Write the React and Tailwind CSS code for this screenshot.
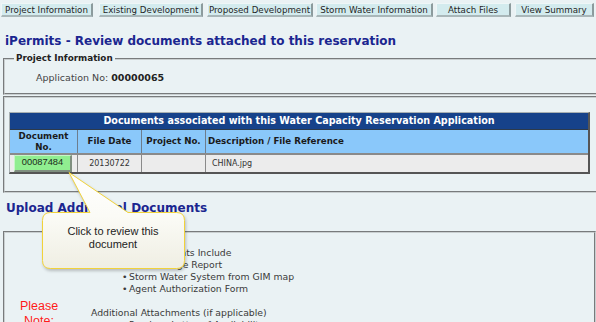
import React from 'react';

const navButtons = [
    { label: 'Project Information', cls: 'ml-[1px] w-[92px]' },
    { label: 'Existing Development', cls: 'ml-[6px] w-[104px]' },
    { label: 'Proposed Development', cls: 'ml-[4px] w-[106px]' },
    { label: 'Storm Water Information', cls: 'ml-[3px] w-[117px]' },
    { label: 'Attach Files', cls: 'ml-[3px] w-[75px]' },
    { label: 'View Summary', cls: 'ml-[4px] w-[79px]' },
];

const requiredDocs = ['Water Usage Report', 'Storm Water System from GIM map', 'Agent Authorization Form'];

const Bullet = ({ children }) => (
    <div className="flex h-[12px] items-center pl-[31px]">
        <span className="w-[7px]">•</span>
        <span>{children}</span>
    </div>
);

const Callout = () => (
    <div className="absolute left-[38px] top-[168px] w-[152px] h-[106px]">
        <svg width="152" height="106" className="absolute left-0 top-0 drop-shadow-[1px_2px_1.5px_rgba(0,0,0,0.22)]">
            <defs>
                <linearGradient id="calloutFill" x1="0" y1="0" x2="0" y2="1">
                    <stop offset="0" stopColor="#ffffff" />
                    <stop offset="0.45" stopColor="#fbfbf6" />
                    <stop offset="1" stopColor="#efeee3" />
                </linearGradient>
            </defs>
            <path
                d="M12.5 44.5 L52 44.5 L31 4.5 L90 44.5 L138.5 44.5 Q146.5 44.5 146.5 52.5 L146.5 92.5 Q146.5 100.5 138.5 100.5 L12.5 100.5 Q4.5 100.5 4.5 92.5 L4.5 52.5 Q4.5 44.5 12.5 44.5 Z"
                fill="url(#calloutFill)"
                stroke="#f1d23a"
                strokeWidth="1"
            />
        </svg>
        <div className="absolute left-[4px] top-[44px] w-[142px] pt-[13px] text-center font-['Liberation_Sans',Arial,sans-serif] text-[11px] leading-[13px] text-[#222]">
            Click to review this
            <br />
            document
        </div>
    </div>
);

export default function App() {
    return (
        <div className="relative w-[596px] h-[322px] overflow-hidden bg-[#eaf2f4] font-['DejaVu_Sans',Verdana,sans-serif] text-[#333]">
            {/* Top navigation */}
            <div className="flex pt-[3px]">
                {navButtons.map((b) => (
                    <div
                        key={b.label}
                        className={`${b.cls} h-[14px] flex items-center justify-center bg-[#d3ebee] border-l border-t border-l-[#eef6f7] border-t-[#eef6f7] border-r-2 border-b-2 border-r-[#8c9b9d] border-b-[#a9b7b9] text-[8.7px] leading-[10px] text-[#1f1f1f] whitespace-nowrap`}
                    >
                        {b.label}
                    </div>
                ))}
            </div>

            <h1 className="mt-[17px] ml-[5px] text-[12px] leading-[15px] font-bold text-[#1b2690] whitespace-nowrap">
                iPermits - Review documents attached to this reservation
            </h1>

            {/* Project information */}
            <fieldset className="mt-[4px] ml-[3px] w-[620px] border-2 [border-style:groove] border-[#c9cfd0] px-[6px] pb-[9px]">
                <legend className="ml-[3px] px-[2px] text-[8.8px] leading-[11px] font-bold text-[#222]">Project Information</legend>
                <div className="mt-[8px] ml-[25px] text-[9.5px] leading-[12px] text-[#444]">
                    Application No: <span className="font-bold text-[#222]">00000065</span>
                </div>
            </fieldset>

            {/* Documents table */}
            <div className="mt-[1px] ml-[3px] w-[620px] border-2 [border-style:groove] border-[#c9cfd0] pt-[14px] pl-[4px] pb-[17px]">
                <div className="w-[581px] border-l border-t border-[#a8b0b2] border-r-2 border-b-2 border-r-[#555] border-b-[#555]">
                    <div className="h-[16px] flex items-center justify-center bg-[#16428a] text-white font-bold text-[9.6px] whitespace-nowrap">
                        Documents associated with this Water Capacity Reservation Application
                    </div>
                    <div className="grid grid-cols-[68px_64px_64px_1fr] border-t border-[#2d3a4a] bg-[#8ac8fa] h-[24px] text-[8.7px] leading-[11px] font-bold text-[#1a1a1a]">
                        <div className="flex items-center justify-center text-center border-r border-[#6d7d8d]">
                            Document
                            <br />
                            No.
                        </div>
                        <div className="flex items-center justify-center border-r border-[#6d7d8d]">File Date</div>
                        <div className="flex items-center justify-center border-r border-[#6d7d8d]">Project No.</div>
                        <div className="flex items-center pl-[2px] whitespace-nowrap">Description / File Reference</div>
                    </div>
                    <div className="grid grid-cols-[68px_64px_64px_1fr] border-t-2 border-[#8a8a8a] bg-[#ececec] h-[19px] text-[8px] text-[#333]">
                        <div className="flex items-center pl-[4px] border-r border-[#8a8a8a]">
                            <div className="w-[58px] h-[17px] flex items-center justify-center bg-[#90ee90] border-l border-t border-[#c8f5c8] border-r-2 border-b-2 border-r-[#7f8f7f] border-b-[#7f8f7f] font-['Liberation_Sans',Arial,sans-serif] text-[9.3px] text-[#1a2a1a]">
                                00087484
                            </div>
                        </div>
                        <div className="flex items-center justify-center border-r border-[#8a8a8a]">20130722</div>
                        <div className="border-r border-[#8a8a8a]"></div>
                        <div className="flex items-center pl-[6px]">CHINA.jpg</div>
                    </div>
                </div>
            </div>

            <h2 className="mt-[8px] ml-[6px] text-[12px] leading-[15px] font-bold text-[#1b2690] whitespace-nowrap">
                Upload Additional Documents
            </h2>

            {/* Notes box */}
            <div className="mt-[15px] ml-[3px] w-[593px] h-[200px] border-2 [border-style:groove] border-[#c9cfd0] flex">
                <div className="w-[86px] pt-[66px]">
                    <div className="w-[68px] text-center font-['Liberation_Sans',Arial,sans-serif] text-[12.5px] leading-[15px] text-[#ff1a1a]">
                        Please
                        <br />
                        Note:
                    </div>
                </div>
                <div className="pt-[14px] text-[9.3px] leading-[12px] text-[#3a3a3a] whitespace-nowrap">
                    <div className="h-[12px] flex items-center">Required Attachments Include</div>
                    {requiredDocs.map((d) => (
                        <Bullet key={d}>{d}</Bullet>
                    ))}
                    <div className="mt-[12px] h-[12px] flex items-center">Additional Attachments (if applicable)</div>
                    <Bullet>Previous Letter of Availability</Bullet>
                </div>
            </div>

            <Callout />
        </div>
    );
}
